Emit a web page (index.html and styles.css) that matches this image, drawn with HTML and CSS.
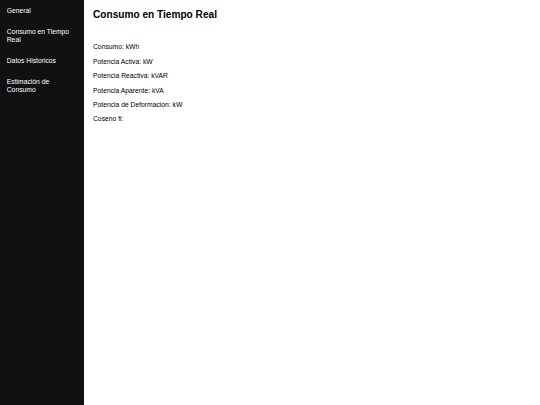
FILE: index.html
```html
<!DOCTYPE html>
<html lang="es">
<head>
<meta charset="utf-8">
<title>Consumo en Tiempo Real</title>
<link rel="stylesheet" href="styles.css">
</head>
<body>
<div class="layout">
  <nav class="sidebar">
    <a class="nav-item" href="#">General</a>
    <a class="nav-item" href="#">Consumo en Tiempo Real</a>
    <a class="nav-item" href="#">Datos Historicos</a>
    <a class="nav-item" href="#">Estimación de Consumo</a>
  </nav>
  <main class="content">
    <h2 class="title">Consumo en Tiempo Real</h2>
    <div class="readings">
      <p class="reading">Consumo: kWh</p>
      <p class="reading">Potencia Activa: kW</p>
      <p class="reading">Potencia Reactiva: kVAR</p>
      <p class="reading">Potencia Aparente: kVA</p>
      <p class="reading">Potencia de Deformación: kW</p>
      <p class="reading">Coseno fi:</p>
    </div>
  </main>
</div>
</body>
</html>
```
FILE: styles.css
```css
html, body {
  margin: 0;
  padding: 0;
  height: 100%;
}
body {
  font-family: "Liberation Sans", Arial, sans-serif;
  font-size: 6.75px;
  color: #000;
  background: #fff;
}
.layout {
  display: flex;
  min-height: 100%;
}
.sidebar {
  width: 84px;
  flex: 0 0 84px;
  background: #111;
  display: flex;
  flex-direction: column;
  padding-top: 1px;
}
.nav-item {
  display: block;
  color: #fff;
  text-decoration: none;
  padding: 6.4px 6.75px 6.9px;
  line-height: 7.7px;
}
.content {
  flex: 1;
  padding: 0 9px;
}
.title {
  font-size: 10.125px;
  font-weight: bold;
  margin: 8.6px 0 0;
}
.readings {
  padding-top: 16.8px;
}
.reading {
  margin: 6.75px 0;
  line-height: 7.7px;
}
```
